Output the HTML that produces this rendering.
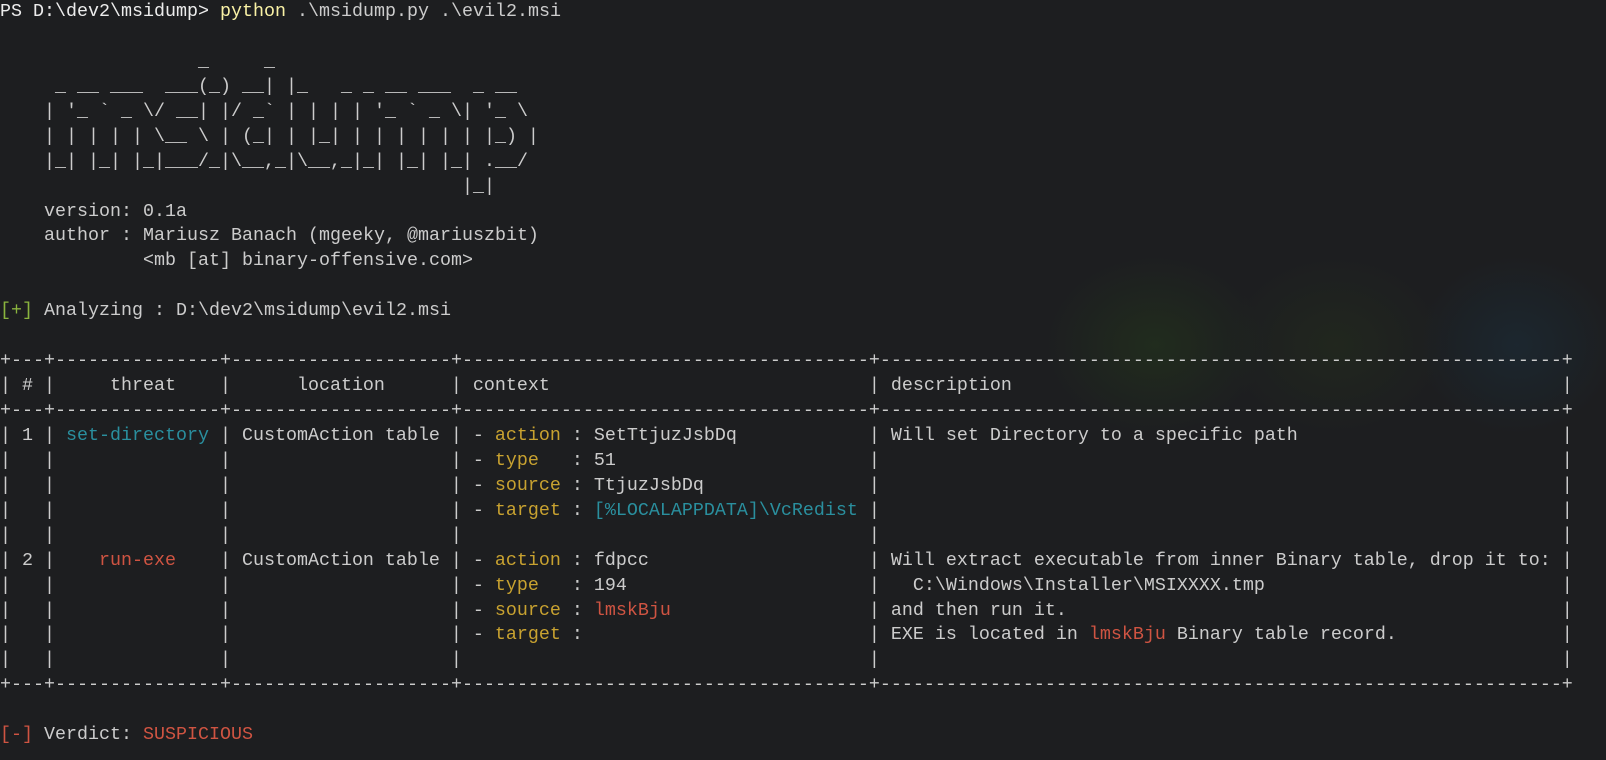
<!DOCTYPE html>
<html><head><meta charset="utf-8">
<style>
html,body{margin:0;padding:0;}
body{width:1606px;height:760px;overflow:hidden;background:#1d1e20;
background-image:
radial-gradient(ellipse 110px 90px at 1155px 345px, rgba(40,70,25,0.35), rgba(40,70,25,0) 100%),
radial-gradient(ellipse 110px 90px at 1336px 345px, rgba(45,65,25,0.25), rgba(45,65,25,0) 100%),
radial-gradient(ellipse 100px 90px at 1517px 345px, rgba(25,55,75,0.35), rgba(25,55,75,0) 100%);
}
#t{font-family:"Liberation Mono",monospace;font-size:18.33px;line-height:24.95px;color:#cccccc;white-space:pre;margin:0;padding:0;}
.l{height:24.95px;white-space:pre;}
.c{display:inline-block;white-space:pre;vertical-align:top;}
.y{color:#f9f1a5}
.g{color:#8ab43e}
.r{color:#cf5442}
.k{color:#c8a230}
.b{color:#2a8f9e}
.w{color:#ececec}
</style></head><body>
<div id="t"><div class="l"><span class="w">PS D:\dev2\msidump&gt; </span><span class="y">python</span> .\msidump.py .\evil2.msi</div><div class="l"> </div><div class="l">                  _     _</div><div class="l">     _ __ ___  ___(_) __| |_   _ _ __ ___  _ __</div><div class="l">    | '_ ` _ \/ __| |/ _` | | | | '_ ` _ \| '_ \</div><div class="l">    | | | | | \__ \ | (_| | |_| | | | | | | |_) |</div><div class="l">    |_| |_| |_|___/_|\__,_|\__,_|_| |_| |_| .__/</div><div class="l">                                          |_|</div><div class="l">    version: 0.1a</div><div class="l">    author : Mariusz Banach (mgeeky, @mariuszbit)</div><div class="l">             &lt;mb [at] binary-offensive.com&gt;</div><div class="l"> </div><div class="l"><span class="g">[+]</span> Analyzing : D:\dev2\msidump\evil2.msi</div><div class="l"> </div><div class="l">+---+---------------+--------------------+-------------------------------------+--------------------------------------------------------------+</div><div class="l">|<span class="c" style="width:3ch"> # </span>|<span class="c" style="width:15ch">     threat</span>|<span class="c" style="width:20ch">      location</span>|<span class="c" style="width:37ch"> context</span>|<span class="c" style="width:62ch"> description</span>|</div><div class="l">+---+---------------+--------------------+-------------------------------------+--------------------------------------------------------------+</div><div class="l">|<span class="c" style="width:3ch"> 1 </span>|<span class="c" style="width:15ch"> <span class="b">set-directory</span></span>|<span class="c" style="width:20ch"> CustomAction table</span>|<span class="c" style="width:37ch"> - <span class="k">action</span> : SetTtjuzJsbDq</span>|<span class="c" style="width:62ch"> Will set Directory to a specific path</span>|</div><div class="l">|<span class="c" style="width:3ch"> </span>|<span class="c" style="width:15ch"> </span>|<span class="c" style="width:20ch"> </span>|<span class="c" style="width:37ch"> - <span class="k">type</span>   : 51</span>|<span class="c" style="width:62ch"> </span>|</div><div class="l">|<span class="c" style="width:3ch"> </span>|<span class="c" style="width:15ch"> </span>|<span class="c" style="width:20ch"> </span>|<span class="c" style="width:37ch"> - <span class="k">source</span> : TtjuzJsbDq</span>|<span class="c" style="width:62ch"> </span>|</div><div class="l">|<span class="c" style="width:3ch"> </span>|<span class="c" style="width:15ch"> </span>|<span class="c" style="width:20ch"> </span>|<span class="c" style="width:37ch"> - <span class="k">target</span> : <span class="b">[%LOCALAPPDATA]\VcRedist</span></span>|<span class="c" style="width:62ch"> </span>|</div><div class="l">|<span class="c" style="width:3ch"> </span>|<span class="c" style="width:15ch"> </span>|<span class="c" style="width:20ch"> </span>|<span class="c" style="width:37ch"> </span>|<span class="c" style="width:62ch"> </span>|</div><div class="l">|<span class="c" style="width:3ch"> 2 </span>|<span class="c" style="width:15ch">    <span class="r">run-exe</span></span>|<span class="c" style="width:20ch"> CustomAction table</span>|<span class="c" style="width:37ch"> - <span class="k">action</span> : fdpcc</span>|<span class="c" style="width:62ch"> Will extract executable from inner Binary table, drop it to:</span>|</div><div class="l">|<span class="c" style="width:3ch"> </span>|<span class="c" style="width:15ch"> </span>|<span class="c" style="width:20ch"> </span>|<span class="c" style="width:37ch"> - <span class="k">type</span>   : 194</span>|<span class="c" style="width:62ch">   C:\Windows\Installer\MSIXXXX.tmp</span>|</div><div class="l">|<span class="c" style="width:3ch"> </span>|<span class="c" style="width:15ch"> </span>|<span class="c" style="width:20ch"> </span>|<span class="c" style="width:37ch"> - <span class="k">source</span> : <span class="r">lmskBju</span></span>|<span class="c" style="width:62ch"> and then run it.</span>|</div><div class="l">|<span class="c" style="width:3ch"> </span>|<span class="c" style="width:15ch"> </span>|<span class="c" style="width:20ch"> </span>|<span class="c" style="width:37ch"> - <span class="k">target</span> :</span>|<span class="c" style="width:62ch"> EXE is located in <span class="r">lmskBju</span> Binary table record.</span>|</div><div class="l">|<span class="c" style="width:3ch"> </span>|<span class="c" style="width:15ch"> </span>|<span class="c" style="width:20ch"> </span>|<span class="c" style="width:37ch"> </span>|<span class="c" style="width:62ch"> </span>|</div><div class="l">+---+---------------+--------------------+-------------------------------------+--------------------------------------------------------------+</div><div class="l"> </div><div class="l"><span class="r">[-]</span> Verdict: <span class="r">SUSPICIOUS</span></div></div>
</body></html>
